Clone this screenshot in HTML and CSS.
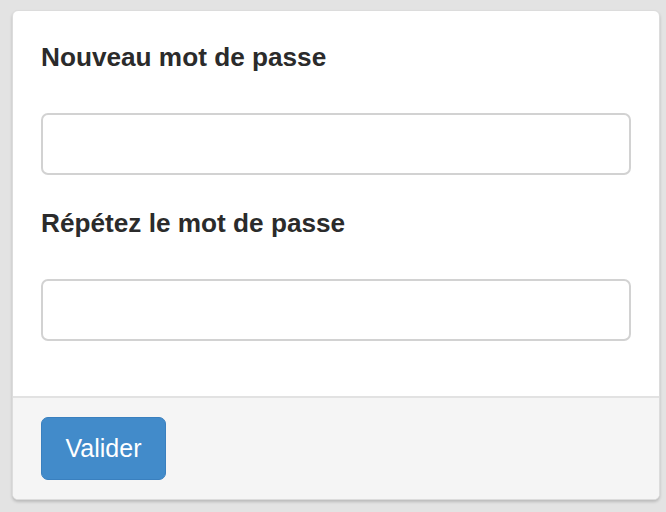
FILE: index.html
```html
<!DOCTYPE html>
<html lang="fr">
<head>
<meta charset="utf-8">
<title>Mot de passe</title>
<link rel="stylesheet" href="styles.css">
</head>
<body>
<form class="panel">
  <div class="panel-body">
    <div class="form-group">
      <label class="label" for="pw1">Nouveau mot de passe</label>
      <input class="input" id="pw1" type="password">
    </div>
    <div class="form-group">
      <label class="label" for="pw2">Répétez le mot de passe</label>
      <input class="input" id="pw2" type="password">
    </div>
  </div>
  <div class="panel-footer">
    <button class="btn" type="submit">Valider</button>
  </div>
</form>
</body>
</html>
```
FILE: styles.css
```css
html, body {
  margin: 0;
  padding: 0;
}
body {
  background: #e3e3e3;
  padding: 10px 6px 0 12px;
  font-family: "Liberation Sans", Arial, sans-serif;
  height: 512px;
  box-sizing: border-box;
}
.panel {
  width: 648px;
  height: 490px;
  box-sizing: border-box;
  background: #fff;
  border: 1px solid #dcdcdc;
  border-radius: 6px;
  box-shadow: 0 2px 3px rgba(0, 0, 0, 0.18);
  display: flex;
  flex-direction: column;
  overflow: hidden;
}
.panel-body {
  flex: 1;
  padding: 31px 28px 0 28px;
}
.form-group {
  display: flex;
  flex-direction: column;
  margin-bottom: 33px;
}
.label {
  display: block;
  font-size: 26.2px;
  line-height: 30px;
  font-weight: bold;
  color: #2b2b2b;
  margin-bottom: 41px;
}
.input {
  display: block;
  height: 62px;
  box-sizing: border-box;
  width: 100%;
  border: 2px solid #d2d2d2;
  border-radius: 7px;
  background: #fff;
  margin: 0;
}
.panel-footer {
  border-top: 2px solid #e2e2e2;
  background: #f5f5f5;
  height: 103px;
  box-sizing: border-box;
  padding: 19px 28px;
}
.btn {
  font-family: "Liberation Sans", Arial, sans-serif;
  font-size: 25px;
  color: #fff;
  background: #428bca;
  border: 1px solid #3a80bf;
  border-radius: 7px;
  width: 125px;
  height: 63px;
  padding: 0;
  margin: 0;
}
```
